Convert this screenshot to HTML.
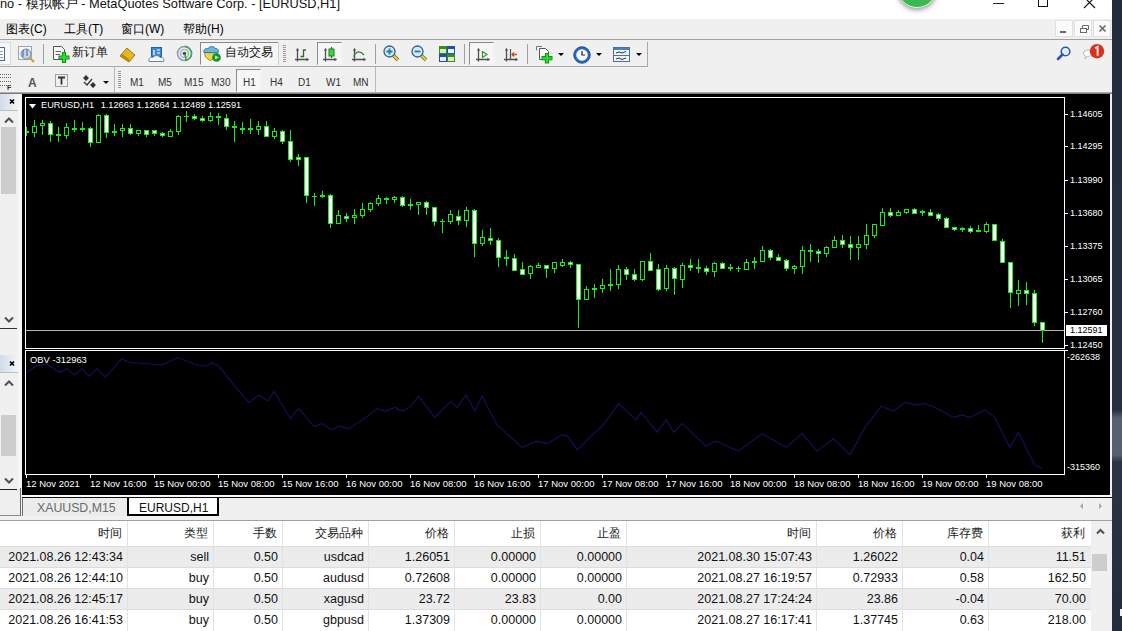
<!DOCTYPE html>
<html><head><meta charset="utf-8">
<style>
*{margin:0;padding:0;box-sizing:border-box}
html,body{width:1122px;height:631px;overflow:hidden;background:#f0f0f0;font-family:"Liberation Sans",sans-serif;color:#000}
.a{position:absolute}
.t{position:absolute;white-space:nowrap;line-height:1}
svg{position:absolute;overflow:visible}
#title{left:0;top:0;width:1112px;height:19px;background:#fff}
#menu{left:0;top:19px;width:1112px;height:21px;background:#f0f0f0;border-bottom:1px solid #a0a0a0}
#tb1{left:0;top:40px;width:1112px;height:27px;background:#f0f0f0}
#tb2{left:0;top:67px;width:1112px;height:27px;background:#f0f0f0}
#desk{left:1112px;top:0;width:10px;height:631px;background:linear-gradient(#222c3b 0,#263040 410px,#56606e 418px,#56606e 455px,#2a3444 462px,#222c3a 631px)}
#chart{left:22px;top:94px;width:1088px;height:401px;background:#000}
.ct{color:#fff;font-size:9px}
#tabs{left:0;top:495px;width:1112px;height:26px;background:#f0f0f0}
#table{left:0;top:521px;width:1112px;height:110px;background:#fff}
.mi{font-size:12px;top:4px}
.tbt{font-size:12px;color:#111}
.tf{font-size:10px;color:#333}
.sep{position:absolute;width:1px;background:#a0a0a0}
.grip{position:absolute;width:3px;background:repeating-linear-gradient(#9a9a9a 0 1px,transparent 1px 2px)}
.pbox{position:absolute;border:1px solid;border-color:#8a8a8a #f4f4f4 #f4f4f4 #8a8a8a;background:#f6f6f6}
.dd{position:absolute;width:0;height:0;border-left:3px solid transparent;border-right:3px solid transparent;border-top:3px solid #000}
.th{position:absolute;top:0;height:25px;line-height:25px;font-size:12px;text-align:right;white-space:nowrap;color:#222}
.row{position:absolute;left:0;width:1091px;height:21px}
.td{position:absolute;top:0;height:21px;line-height:23px;font-size:12.5px;text-align:right;white-space:nowrap;color:#111}
.vl{position:absolute;top:0;width:1px;height:110px;background:#e2e2e2}
</style></head><body>

<div id="title" class="a">
 <div class="t" style="left:0px;top:-2px;font-size:12.8px;color:#111">no - 模拟帐户 - MetaQuotes Software Corp. - [EURUSD,H1]</div>
 <!-- green circle -->
 <div class="a" style="left:897px;top:-32px;width:40px;height:40px;border-radius:50%;background:#3cba50;box-shadow:0 2px 5px rgba(0,0,0,.4);border:1.5px solid #e0f4e0"></div>
 <svg width="1122" height="19" style="left:0;top:0">
  <rect x="993" y="3" width="11" height="1" fill="#222"/>
  <rect x="1038.5" y="-3.5" width="9" height="10" fill="none" stroke="#111" stroke-width="1"/>
  <path d="M1084,-3 L1095,8 M1095,-3 L1084,8" stroke="#111" stroke-width="1.1"/>
 </svg>
</div>

<div id="menu" class="a">
 <div class="t mi" style="left:6px">图表(C)</div>
 <div class="t mi" style="left:64px">工具(T)</div>
 <div class="t mi" style="left:121px">窗口(W)</div>
 <div class="t mi" style="left:183px">帮助(H)</div>
 <div class="a" style="left:1055px;top:1px;width:18px;height:17px;background:#fbfbfb;border:1px solid #e0e0e0"></div>
 <div class="a" style="left:1074px;top:1px;width:18px;height:17px;background:#fbfbfb;border:1px solid #e0e0e0"></div>
 <div class="a" style="left:1093px;top:1px;width:18px;height:17px;background:#fbfbfb;border:1px solid #e0e0e0"></div>
 <svg width="60" height="20" style="left:1055px;top:0">
  <rect x="5" y="12" width="6" height="2" fill="#6a6a6a"/>
  <rect x="25.5" y="9.5" width="6" height="4" fill="none" stroke="#6a6a6a"/>
  <path d="M27.5,9.5 V6.5 H33.5 V10.5 H31.5" fill="none" stroke="#6a6a6a"/>
  <path d="M44.5,6.5 L50.5,12.5 M50.5,6.5 L44.5,12.5" stroke="#6a6a6a" stroke-width="1.7"/>
 </svg>
</div>

<div id="tb1" class="a">
 <!-- group 1 -->
 <div class="pbox" style="left:-2px;top:2px;width:13px;height:23px;background:#f6f8fb;border-color:#d9d9d9"></div>
 <svg width="10" height="20" style="left:0;top:5px"><rect x="-4.5" y="2.5" width="9" height="13" fill="#fff" stroke="#4a6b9a"/><path d="M-3,6.5 H3 M-3,9.5 H3 M-3,12.5 H3" stroke="#8aa0c0"/></svg>
 <svg width="18" height="18" style="left:18px;top:46px;top:6px">
  <rect x="0.5" y="0.5" width="13" height="13" fill="#f4f6f8" stroke="#9aa6b2"/>
  <circle cx="8" cy="8" r="5" fill="#c4d4e8" stroke="#7890aa"/>
  <path d="M5,4 V11 M9,3 V10" stroke="#45607e"/>
  <path d="M11.5,11.5 L16,16" stroke="#c8a040" stroke-width="2.2"/>
 </svg>
 <div class="sep" style="left:43px;top:4px;height:20px"></div>
 <svg width="18" height="18" style="left:53px;top:6px">
  <path d="M0.5,0.5 H8.5 L11.5,3.5 V13.5 H0.5 Z" fill="#f8f8f8" stroke="#555"/>
  <path d="M2.5,5.5 H8 M2.5,8.5 H7" stroke="#666"/>
  <path d="M11,6 V17 M5.5,11.5 H16.5" stroke="#0a9a14" stroke-width="4.2"/>
  <path d="M11,7 V16 M6.5,11.5 H15.5" stroke="#38d838" stroke-width="2"/>
 </svg>
 <div class="t tbt" style="left:72px;top:6px">新订单</div>
 <svg width="18" height="16" style="left:119px;top:7px">
  <path d="M1,9 L8,1 L16,8 L10,15 Z" fill="#e6b820" stroke="#a07810"/>
  <path d="M1,9 L10,15 L10,12 L3,7 Z" fill="#b88a10"/>
 </svg>
 <svg width="18" height="16" style="left:148px;top:7px">
  <rect x="3.5" y="0.5" width="10" height="9" fill="#3d8ad8" stroke="#2060a8"/>
  <path d="M6,3 V8 M9,3 H12 M9,6 H12" stroke="#fff" stroke-width="1.2"/>
  <path d="M1,14.5 C0,11 3,9.5 5,10.5 C6,8 11,8 12,10.5 C14.5,9.5 17,12 15.5,14.5 Z" fill="#f4f6fa" stroke="#6a80a0"/>
 </svg>
 <svg width="18" height="18" style="left:176px;top:5px">
  <path d="M8.5,1.5 A7,7 0 0 0 8.5,15.5" fill="none" stroke="#8a9ab8" stroke-width="1.6"/>
  <path d="M8.5,4.5 A4,4 0 0 0 8.5,12.5" fill="none" stroke="#a8b4d0" stroke-width="1.6"/>
  <path d="M8.5,1.5 A7,7 0 0 1 8.5,15.5" fill="none" stroke="#5a9a68" stroke-width="1.8"/>
  <path d="M8.5,4.5 A4,4 0 0 1 8.5,12.5" fill="none" stroke="#8ac898" stroke-width="1.6"/>
  <circle cx="8.5" cy="8.5" r="1.8" fill="#2f5a58"/>
  <path d="M9,9 L10,15" stroke="#4a8a58" stroke-width="1.5"/>
 </svg>
 <div class="pbox" style="left:200px;top:2px;width:79px;height:23px"></div>
 <svg width="20" height="18" style="left:203px;top:5px">
  <path d="M1.5,7.5 L14.5,7.5 L13,13 L7,15.5 L2.5,12 Z" fill="#ecd83a" stroke="#a08a20"/>
  <path d="M1,7.5 C0,4.5 3,3 5,3.8 C6,1 11,0.8 12,3.5 C14.5,3 16.5,5.5 15,7.8 Z" fill="#6ab8e0" stroke="#2a78b0"/>
  <circle cx="13.5" cy="12.5" r="4.3" fill="#12942a"/>
  <path d="M12.2,10.5 L15.8,12.5 L12.2,14.5 Z" fill="#d8f8d0"/>
 </svg>
 <div class="t tbt" style="left:225px;top:6px">自动交易</div>
 <!-- group 2 -->
 <div class="sep" style="left:278px;top:2px;height:23px;background:#d0d0d0"></div>
 <div class="grip" style="left:283px;top:5px;height:18px"></div>
 <svg width="16" height="16" style="left:294px;top:48px;top:8px"><path d="M3.5,0.5 V13.5 M1,11.5 H14.5" fill="none" stroke="#505050" stroke-width="1.3"/><path d="M1.8,2.6 L3.5,0.3 L5.2,2.6 Z M12.4,9.8 L14.8,11.5 L12.4,13.2 Z" fill="#505050"/><path d="M6.5,8.5 H9.5 V2 H12" fill="none" stroke="#2f6a2f" stroke-width="1.3"/></svg>
 <div class="pbox" style="left:317px;top:2px;width:25px;height:23px"></div>
 <svg width="16" height="16" style="left:322px;top:8px"><path d="M3.5,0.5 V13.5 M1,11.5 H14.5" fill="none" stroke="#505050" stroke-width="1.3"/><path d="M1.8,2.6 L3.5,0.3 L5.2,2.6 Z M12.4,9.8 L14.8,11.5 L12.4,13.2 Z" fill="#505050"/><path d="M9.5,-1 V10" stroke="#2a6a2a" stroke-width="1.2"/><rect x="7" y="1" width="5" height="7" fill="#3cd83c" stroke="#1a7a1a"/></svg>
 <svg width="16" height="16" style="left:351px;top:8px"><path d="M3.5,0.5 V13.5 M1,11.5 H14.5" fill="none" stroke="#505050" stroke-width="1.3"/><path d="M1.8,2.6 L3.5,0.3 L5.2,2.6 Z M12.4,9.8 L14.8,11.5 L12.4,13.2 Z" fill="#505050"/><path d="M2.5,8.5 Q7,0 13,7" fill="none" stroke="#3a7a3a" stroke-width="1.2"/></svg>
 <div class="sep" style="left:375px;top:4px;height:20px"></div>
 <svg width="18" height="16" style="left:383px;top:5px">
  <path d="M9.5,9.5 L15,15" stroke="#6a6a30" stroke-width="3.6"/><path d="M9.5,9.5 L15,15" stroke="#e8d040" stroke-width="2"/>
  <circle cx="6.5" cy="6.5" r="5.5" fill="#cfeefa" stroke="#3a5a8a" stroke-width="1.3"/>
  <path d="M3.5,6.5 H9.5 M6.5,3.5 V9.5" stroke="#2a7aa0" stroke-width="1.8"/>
 </svg>
 <svg width="18" height="16" style="left:411px;top:5px">
  <path d="M9.5,9.5 L15,15" stroke="#6a6a30" stroke-width="3.6"/><path d="M9.5,9.5 L15,15" stroke="#e8d040" stroke-width="2"/>
  <circle cx="6.5" cy="6.5" r="5.5" fill="#cfeefa" stroke="#3a5a8a" stroke-width="1.3"/>
  <path d="M3.5,6.5 H9.5" stroke="#2a7aa0" stroke-width="1.8"/>
 </svg>
 <svg width="18" height="17" style="left:439px;top:6px">
  <rect x="0" y="0" width="8" height="8" fill="#3a8a2a"/><rect x="8" y="0" width="8" height="8" fill="#2050a8"/>
  <rect x="0" y="8" width="8" height="8" fill="#2050a8"/><rect x="8" y="8" width="8" height="8" fill="#3a8a2a"/>
  <rect x="1" y="3" width="6" height="4" fill="#d8f0b8"/><rect x="9" y="3" width="6" height="4" fill="#e8f0ff"/>
  <rect x="1" y="11" width="6" height="4" fill="#e8f0ff"/><rect x="9" y="11" width="6" height="4" fill="#d8f0b8"/>
 </svg>
 <div class="sep" style="left:464px;top:4px;height:20px"></div>
 <div class="pbox" style="left:469px;top:2px;width:25px;height:23px"></div>
 <svg width="16" height="16" style="left:475px;top:8px"><path d="M3.5,0.5 V13.5 M1,11.5 H14.5" fill="none" stroke="#505050" stroke-width="1.3"/><path d="M1.8,2.6 L3.5,0.3 L5.2,2.6 Z M12.4,9.8 L14.8,11.5 L12.4,13.2 Z" fill="#505050"/><path d="M7.5,3.5 L12,6.5 L7.5,9.5 Z" fill="none" stroke="#2a9a2a" stroke-width="1.2"/></svg>
 <svg width="16" height="16" style="left:503px;top:8px"><path d="M3.5,0.5 V13.5 M1,11.5 H14.5" fill="none" stroke="#505050" stroke-width="1.3"/><path d="M1.8,2.6 L3.5,0.3 L5.2,2.6 Z M12.4,9.8 L14.8,11.5 L12.4,13.2 Z" fill="#505050"/><path d="M7.5,1 V11" stroke="#505050" stroke-width="1.2"/><path d="M14,6.5 H9 M11,4.5 L9,6.5 L11,8.5" fill="none" stroke="#c05020" stroke-width="1.3"/></svg>
 <div class="sep" style="left:527px;top:4px;height:20px"></div>
 <svg width="18" height="18" style="left:536px;top:6px">
  <path d="M3.5,2.5 H9.5 L12.5,5.5 V13.5 H3.5 Z" fill="#fff" stroke="#555"/>
  <path d="M0.5,4.5 V0.5 H6" fill="none" stroke="#777"/>
  <path d="M11,7 V17.5 M5.5,12.2 H16.5" stroke="#0a9a14" stroke-width="4.2"/>
  <path d="M11,8 V16.5 M6.5,12.2 H15.5" stroke="#38d838" stroke-width="2"/>
 </svg>
 <div class="dd" style="left:558px;top:13px"></div>
 <svg width="18" height="18" style="left:573px;top:6px">
  <circle cx="9" cy="9" r="8.2" fill="#2a68c0" stroke="#1a4890"/>
  <circle cx="9" cy="9" r="5.8" fill="#f4f8ff"/>
  <path d="M9,5 V9 H12" fill="none" stroke="#222" stroke-width="1.2"/>
 </svg>
 <div class="dd" style="left:596px;top:13px"></div>
 <svg width="18" height="16" style="left:613px;top:7px">
  <rect x="0.5" y="0.5" width="16" height="14" fill="#eef4fa" stroke="#4a70a0"/>
  <rect x="1" y="1" width="15" height="2" fill="#4a80c0"/>
  <path d="M0.5,8.5 H16.5" stroke="#4a70a0"/>
  <path d="M3,6 L6,5 L9,6 L13,4.5 M3,12 L6,11 L9,12.5 L13,11" fill="none" stroke="#333"/>
 </svg>
 <div class="dd" style="left:636px;top:13px"></div>
 <div class="sep" style="left:647px;top:2px;height:25px;background:#a8a8a8"></div>
 <!-- right icons -->
 <svg width="16" height="16" style="left:1056px;top:6px">
  <circle cx="9.5" cy="5.5" r="4.3" fill="#e8f0fc" stroke="#2a58b0" stroke-width="1.6"/>
  <path d="M6.5,8.5 L2,13" stroke="#2a58b0" stroke-width="2.6" stroke-linecap="round"/>
 </svg>
 <svg width="24" height="20" style="left:1082px;top:3px">
  <path d="M1.5,10 C1.5,6 11,6 11,10 C11,13 6,13.5 5,13.5 L3,16 L3.5,13 C2,12.5 1.5,11.5 1.5,10 Z" fill="#fafafa" stroke="#b8b8b8"/>
  <circle cx="15" cy="8.2" r="7.2" fill="#d8321e"/>
  <path d="M13.2,5.3 L15.6,3.8 V12.8" fill="none" stroke="#fff" stroke-width="1.8"/>
 </svg>
 <div class="a" style="left:0;top:26px;width:648px;height:1px;background:#a8a8a8"></div>
</div>

<div id="tb2" class="a">
 <svg width="14" height="20" style="left:0;top:6px">
  <path d="M0,1.5 H11 M0,4.5 H11 M0,8.5 H11 M0,12.5 H8" stroke="#666" stroke-dasharray="1 1"/>
  <text x="7" y="17" font-size="7" font-weight="bold" fill="#333" font-family="Liberation Sans">F</text>
 </svg>
 <div class="t" style="left:28px;top:10px;font-size:12px;font-weight:bold;color:#555">A</div>
 <svg width="14" height="14" style="left:55px;top:7px">
  <rect x="0.5" y="0.5" width="12" height="12" fill="none" stroke="#555" stroke-dasharray="1 1"/>
  <path d="M3,3.5 H10 M6.5,3.5 V10.5" stroke="#333" stroke-width="1.8"/>
 </svg>
 <svg width="16" height="16" style="left:82px;top:7px">
  <path d="M1,4 L4,1 L7,4 L4,7 Z M8,11 L11,8 L14,11 L11,14 Z" fill="#333"/>
  <path d="M2,8 L5,11 L10,5" fill="none" stroke="#333" stroke-width="1.3"/>
 </svg>
 <div class="dd" style="left:103px;top:14px;border-top-color:#111"></div>
 <div class="sep" style="left:114px;top:0px;height:26px;background:#b8b8b8"></div>
 <div class="grip" style="left:118px;top:4px;height:18px"></div>
 <div class="t tf" style="left:130px;top:11px">M1</div>
 <div class="t tf" style="left:158px;top:11px">M5</div>
 <div class="t tf" style="left:184px;top:11px">M15</div>
 <div class="t tf" style="left:211px;top:11px">M30</div>
 <div class="pbox" style="left:236px;top:2px;width:25px;height:23px"></div>
 <div class="t tf" style="left:243px;top:11px">H1</div>
 <div class="t tf" style="left:270px;top:11px">H4</div>
 <div class="t tf" style="left:298px;top:11px">D1</div>
 <div class="t tf" style="left:326px;top:11px">W1</div>
 <div class="t tf" style="left:353px;top:11px">MN</div>
 <div class="sep" style="left:375px;top:0px;height:26px;background:#b8b8b8"></div>
 <div class="a" style="left:0;top:25px;width:1112px;height:2px;background:linear-gradient(#c8c8c8,#606060)"></div>
</div>

<!-- left navigator panels -->
<div class="a" style="left:0;top:94px;width:18px;height:400px;background:#f0f0f0">
 <div class="a" style="left:0;top:0;width:18px;height:16px;background:linear-gradient(90deg,#cfdcec,#f4f4f4)"></div>
 <svg width="18" height="16" style="left:0;top:0"><path d="M10,5.5 L14,9.5 M14,5.5 L10,9.5" stroke="#000" stroke-width="1.7"/></svg>
 <div class="a" style="left:0;top:16px;width:18px;height:1px;background:#c0c0c0"></div>
 <svg width="18" height="10" style="left:0;top:22px"><path d="M5,6.5 L9,2.5 L13,6.5" fill="none" stroke="#505050" stroke-width="2"/></svg>
 <div class="a" style="left:1px;top:33px;width:15px;height:67px;background:#cdcdcd"></div>
 <svg width="18" height="10" style="left:0;top:221px"><path d="M5,2.5 L9,6.5 L13,2.5" fill="none" stroke="#505050" stroke-width="2"/></svg>
 <div class="a" style="left:0;top:234px;width:17px;height:1px;background:#333"></div>
 <div class="a" style="left:0;top:261px;width:18px;height:17px;background:linear-gradient(90deg,#cfdcec,#f4f4f4)"></div>
 <svg width="18" height="16" style="left:0;top:262px"><path d="M10,5.5 L14,9.5 M14,5.5 L10,9.5" stroke="#000" stroke-width="1.7"/></svg>
 <div class="a" style="left:0;top:278px;width:18px;height:1px;background:#c0c0c0"></div>
 <svg width="18" height="10" style="left:0;top:285px"><path d="M5,6.5 L9,2.5 L13,6.5" fill="none" stroke="#505050" stroke-width="2"/></svg>
 <div class="a" style="left:1px;top:321px;width:15px;height:41px;background:#cdcdcd"></div>
 <svg width="18" height="10" style="left:0;top:382px"><path d="M5,2.5 L9,6.5 L13,2.5" fill="none" stroke="#505050" stroke-width="2"/></svg>
 <div class="a" style="left:0;top:395px;width:17px;height:1px;background:#333"></div>
 <div class="a" style="left:18px;top:0;width:4px;height:400px;background:#f6f6f6"></div>
</div>

<div id="chart" class="a">
<svg width="1088" height="401" viewBox="22 94 1088 401" style="left:0;top:0">
 <defs><clipPath id="cp"><rect x="26" y="98" width="1038" height="250"/></clipPath></defs>
 <g shape-rendering="crispEdges">
 <rect x="26" y="330" width="1038" height="1" fill="#b4b4b4"/>
 <g clip-path="url(#cp)"><rect x="26" y="127" width="1" height="9" fill="#14f014"/><rect x="24" y="131" width="5" height="2" fill="#14f014"/><rect x="34" y="120" width="1" height="17" fill="#14f014"/><rect x="32" y="126" width="5" height="7" fill="#14f014"/><rect x="33" y="127" width="3" height="5" fill="#000000"/><rect x="42" y="120" width="1" height="15" fill="#14f014"/><rect x="40" y="123" width="5" height="3" fill="#14f014"/><rect x="41" y="124" width="3" height="1" fill="#000000"/><rect x="50" y="121" width="1" height="21" fill="#14f014"/><rect x="48" y="123" width="5" height="12" fill="#14f014"/><rect x="49" y="124" width="3" height="10" fill="#ffffff"/><rect x="58" y="127" width="1" height="15" fill="#14f014"/><rect x="56" y="134" width="5" height="2" fill="#14f014"/><rect x="66" y="123" width="1" height="16" fill="#14f014"/><rect x="64" y="127" width="5" height="9" fill="#14f014"/><rect x="65" y="128" width="3" height="7" fill="#000000"/><rect x="74" y="120" width="1" height="12" fill="#14f014"/><rect x="72" y="128" width="5" height="2" fill="#14f014"/><rect x="82" y="122" width="1" height="10" fill="#14f014"/><rect x="80" y="128" width="5" height="2" fill="#14f014"/><rect x="90" y="127" width="1" height="20" fill="#14f014"/><rect x="88" y="128" width="5" height="15" fill="#14f014"/><rect x="89" y="129" width="3" height="13" fill="#ffffff"/><rect x="98" y="114" width="1" height="29" fill="#14f014"/><rect x="96" y="115" width="5" height="28" fill="#14f014"/><rect x="97" y="116" width="3" height="26" fill="#000000"/><rect x="106" y="114" width="1" height="24" fill="#14f014"/><rect x="104" y="115" width="5" height="18" fill="#14f014"/><rect x="105" y="116" width="3" height="16" fill="#ffffff"/><rect x="114" y="124" width="1" height="12" fill="#14f014"/><rect x="112" y="131" width="5" height="2" fill="#14f014"/><rect x="122" y="124" width="1" height="13" fill="#14f014"/><rect x="120" y="128" width="5" height="3" fill="#14f014"/><rect x="121" y="129" width="3" height="1" fill="#000000"/><rect x="130" y="124" width="1" height="11" fill="#14f014"/><rect x="128" y="128" width="5" height="6" fill="#14f014"/><rect x="129" y="129" width="3" height="4" fill="#ffffff"/><rect x="138" y="130" width="1" height="6" fill="#14f014"/><rect x="136" y="130" width="5" height="4" fill="#14f014"/><rect x="137" y="131" width="3" height="2" fill="#000000"/><rect x="146" y="130" width="1" height="7" fill="#14f014"/><rect x="144" y="130" width="5" height="5" fill="#14f014"/><rect x="145" y="131" width="3" height="3" fill="#ffffff"/><rect x="154" y="130" width="1" height="6" fill="#14f014"/><rect x="152" y="130" width="5" height="4" fill="#14f014"/><rect x="153" y="131" width="3" height="2" fill="#ffffff"/><rect x="162" y="132" width="1" height="5" fill="#14f014"/><rect x="160" y="133" width="5" height="3" fill="#14f014"/><rect x="161" y="134" width="3" height="1" fill="#ffffff"/><rect x="170" y="129" width="1" height="8" fill="#14f014"/><rect x="168" y="131" width="5" height="6" fill="#14f014"/><rect x="169" y="132" width="3" height="4" fill="#000000"/><rect x="178" y="115" width="1" height="20" fill="#14f014"/><rect x="176" y="116" width="5" height="16" fill="#14f014"/><rect x="177" y="117" width="3" height="14" fill="#000000"/><rect x="186" y="111" width="1" height="11" fill="#14f014"/><rect x="184" y="116" width="5" height="1" fill="#14f014"/><rect x="194" y="114" width="1" height="6" fill="#14f014"/><rect x="192" y="116" width="5" height="3" fill="#14f014"/><rect x="193" y="117" width="3" height="1" fill="#ffffff"/><rect x="202" y="116" width="1" height="6" fill="#14f014"/><rect x="200" y="118" width="5" height="3" fill="#14f014"/><rect x="201" y="119" width="3" height="1" fill="#ffffff"/><rect x="210" y="112" width="1" height="10" fill="#14f014"/><rect x="208" y="116" width="5" height="5" fill="#14f014"/><rect x="209" y="117" width="3" height="3" fill="#000000"/><rect x="218" y="113" width="1" height="12" fill="#14f014"/><rect x="216" y="116" width="5" height="2" fill="#14f014"/><rect x="226" y="114" width="1" height="16" fill="#14f014"/><rect x="224" y="118" width="5" height="9" fill="#14f014"/><rect x="225" y="119" width="3" height="7" fill="#ffffff"/><rect x="234" y="121" width="1" height="21" fill="#14f014"/><rect x="232" y="126" width="5" height="2" fill="#14f014"/><rect x="242" y="122" width="1" height="12" fill="#14f014"/><rect x="240" y="128" width="5" height="2" fill="#14f014"/><rect x="250" y="119" width="1" height="15" fill="#14f014"/><rect x="248" y="128" width="5" height="2" fill="#14f014"/><rect x="258" y="121" width="1" height="14" fill="#14f014"/><rect x="256" y="126" width="5" height="4" fill="#14f014"/><rect x="257" y="127" width="3" height="2" fill="#000000"/><rect x="266" y="121" width="1" height="16" fill="#14f014"/><rect x="264" y="126" width="5" height="11" fill="#14f014"/><rect x="265" y="127" width="3" height="9" fill="#ffffff"/><rect x="274" y="128" width="1" height="11" fill="#14f014"/><rect x="272" y="131" width="5" height="6" fill="#14f014"/><rect x="273" y="132" width="3" height="4" fill="#000000"/><rect x="282" y="130" width="1" height="14" fill="#14f014"/><rect x="280" y="131" width="5" height="11" fill="#14f014"/><rect x="281" y="132" width="3" height="9" fill="#ffffff"/><rect x="290" y="130" width="1" height="32" fill="#14f014"/><rect x="288" y="141" width="5" height="19" fill="#14f014"/><rect x="289" y="142" width="3" height="17" fill="#ffffff"/><rect x="298" y="154" width="1" height="12" fill="#14f014"/><rect x="296" y="157" width="5" height="3" fill="#14f014"/><rect x="297" y="158" width="3" height="1" fill="#ffffff"/><rect x="306" y="157" width="1" height="46" fill="#14f014"/><rect x="304" y="157" width="5" height="39" fill="#14f014"/><rect x="305" y="158" width="3" height="37" fill="#ffffff"/><rect x="314" y="193" width="1" height="13" fill="#14f014"/><rect x="312" y="196" width="5" height="1" fill="#14f014"/><rect x="322" y="191" width="1" height="7" fill="#14f014"/><rect x="320" y="195" width="5" height="2" fill="#14f014"/><rect x="330" y="194" width="1" height="34" fill="#14f014"/><rect x="328" y="195" width="5" height="29" fill="#14f014"/><rect x="329" y="196" width="3" height="27" fill="#ffffff"/><rect x="338" y="210" width="1" height="14" fill="#14f014"/><rect x="336" y="215" width="5" height="9" fill="#14f014"/><rect x="337" y="216" width="3" height="7" fill="#000000"/><rect x="346" y="213" width="1" height="9" fill="#14f014"/><rect x="344" y="216" width="5" height="3" fill="#14f014"/><rect x="345" y="217" width="3" height="1" fill="#ffffff"/><rect x="354" y="209" width="1" height="15" fill="#14f014"/><rect x="352" y="215" width="5" height="3" fill="#14f014"/><rect x="353" y="216" width="3" height="1" fill="#000000"/><rect x="362" y="203" width="1" height="15" fill="#14f014"/><rect x="360" y="209" width="5" height="7" fill="#14f014"/><rect x="361" y="210" width="3" height="5" fill="#000000"/><rect x="370" y="202" width="1" height="10" fill="#14f014"/><rect x="368" y="203" width="5" height="7" fill="#14f014"/><rect x="369" y="204" width="3" height="5" fill="#000000"/><rect x="378" y="195" width="1" height="11" fill="#14f014"/><rect x="376" y="198" width="5" height="6" fill="#14f014"/><rect x="377" y="199" width="3" height="4" fill="#000000"/><rect x="386" y="197" width="1" height="7" fill="#14f014"/><rect x="384" y="198" width="5" height="2" fill="#14f014"/><rect x="394" y="196" width="1" height="7" fill="#14f014"/><rect x="392" y="197" width="5" height="3" fill="#14f014"/><rect x="393" y="198" width="3" height="1" fill="#000000"/><rect x="402" y="196" width="1" height="11" fill="#14f014"/><rect x="400" y="197" width="5" height="9" fill="#14f014"/><rect x="401" y="198" width="3" height="7" fill="#ffffff"/><rect x="410" y="199" width="1" height="11" fill="#14f014"/><rect x="408" y="204" width="5" height="2" fill="#14f014"/><rect x="418" y="202" width="1" height="13" fill="#14f014"/><rect x="416" y="202" width="5" height="3" fill="#14f014"/><rect x="417" y="203" width="3" height="1" fill="#000000"/><rect x="426" y="201" width="1" height="14" fill="#14f014"/><rect x="424" y="202" width="5" height="6" fill="#14f014"/><rect x="425" y="203" width="3" height="4" fill="#ffffff"/><rect x="434" y="207" width="1" height="19" fill="#14f014"/><rect x="432" y="207" width="5" height="15" fill="#14f014"/><rect x="433" y="208" width="3" height="13" fill="#ffffff"/><rect x="442" y="219" width="1" height="14" fill="#14f014"/><rect x="440" y="221" width="5" height="1" fill="#14f014"/><rect x="450" y="210" width="1" height="14" fill="#14f014"/><rect x="448" y="214" width="5" height="8" fill="#14f014"/><rect x="449" y="215" width="3" height="6" fill="#000000"/><rect x="458" y="210" width="1" height="15" fill="#14f014"/><rect x="456" y="216" width="5" height="5" fill="#14f014"/><rect x="457" y="217" width="3" height="3" fill="#ffffff"/><rect x="466" y="207" width="1" height="20" fill="#14f014"/><rect x="464" y="210" width="5" height="11" fill="#14f014"/><rect x="465" y="211" width="3" height="9" fill="#000000"/><rect x="474" y="209" width="1" height="48" fill="#14f014"/><rect x="472" y="210" width="5" height="34" fill="#14f014"/><rect x="473" y="211" width="3" height="32" fill="#ffffff"/><rect x="482" y="230" width="1" height="16" fill="#14f014"/><rect x="480" y="237" width="5" height="7" fill="#14f014"/><rect x="481" y="238" width="3" height="5" fill="#000000"/><rect x="490" y="228" width="1" height="17" fill="#14f014"/><rect x="488" y="238" width="5" height="3" fill="#14f014"/><rect x="489" y="239" width="3" height="1" fill="#ffffff"/><rect x="498" y="238" width="1" height="29" fill="#14f014"/><rect x="496" y="240" width="5" height="18" fill="#14f014"/><rect x="497" y="241" width="3" height="16" fill="#ffffff"/><rect x="506" y="250" width="1" height="16" fill="#14f014"/><rect x="504" y="257" width="5" height="2" fill="#14f014"/><rect x="514" y="254" width="1" height="17" fill="#14f014"/><rect x="512" y="258" width="5" height="13" fill="#14f014"/><rect x="513" y="259" width="3" height="11" fill="#ffffff"/><rect x="522" y="262" width="1" height="13" fill="#14f014"/><rect x="520" y="269" width="5" height="6" fill="#14f014"/><rect x="521" y="270" width="3" height="4" fill="#ffffff"/><rect x="530" y="265" width="1" height="14" fill="#14f014"/><rect x="528" y="266" width="5" height="8" fill="#14f014"/><rect x="529" y="267" width="3" height="6" fill="#000000"/><rect x="538" y="263" width="1" height="5" fill="#14f014"/><rect x="536" y="265" width="5" height="3" fill="#14f014"/><rect x="537" y="266" width="3" height="1" fill="#000000"/><rect x="546" y="265" width="1" height="13" fill="#14f014"/><rect x="544" y="265" width="5" height="4" fill="#14f014"/><rect x="545" y="266" width="3" height="2" fill="#ffffff"/><rect x="554" y="262" width="1" height="11" fill="#14f014"/><rect x="552" y="262" width="5" height="7" fill="#14f014"/><rect x="553" y="263" width="3" height="5" fill="#000000"/><rect x="562" y="259" width="1" height="8" fill="#14f014"/><rect x="560" y="262" width="5" height="4" fill="#14f014"/><rect x="561" y="263" width="3" height="2" fill="#000000"/><rect x="570" y="261" width="1" height="7" fill="#14f014"/><rect x="568" y="262" width="5" height="3" fill="#14f014"/><rect x="569" y="263" width="3" height="1" fill="#ffffff"/><rect x="578" y="264" width="1" height="64" fill="#14f014"/><rect x="576" y="264" width="5" height="36" fill="#14f014"/><rect x="577" y="265" width="3" height="34" fill="#ffffff"/><rect x="586" y="286" width="1" height="14" fill="#14f014"/><rect x="584" y="289" width="5" height="11" fill="#14f014"/><rect x="585" y="290" width="3" height="9" fill="#000000"/><rect x="594" y="284" width="1" height="14" fill="#14f014"/><rect x="592" y="288" width="5" height="2" fill="#14f014"/><rect x="602" y="279" width="1" height="14" fill="#14f014"/><rect x="600" y="285" width="5" height="4" fill="#14f014"/><rect x="601" y="286" width="3" height="2" fill="#000000"/><rect x="610" y="269" width="1" height="22" fill="#14f014"/><rect x="608" y="284" width="5" height="2" fill="#14f014"/><rect x="618" y="265" width="1" height="24" fill="#14f014"/><rect x="616" y="269" width="5" height="16" fill="#14f014"/><rect x="617" y="270" width="3" height="14" fill="#000000"/><rect x="626" y="267" width="1" height="13" fill="#14f014"/><rect x="624" y="269" width="5" height="6" fill="#14f014"/><rect x="625" y="270" width="3" height="4" fill="#ffffff"/><rect x="634" y="269" width="1" height="12" fill="#14f014"/><rect x="632" y="274" width="5" height="6" fill="#14f014"/><rect x="633" y="275" width="3" height="4" fill="#ffffff"/><rect x="642" y="261" width="1" height="20" fill="#14f014"/><rect x="640" y="261" width="5" height="19" fill="#14f014"/><rect x="641" y="262" width="3" height="17" fill="#000000"/><rect x="650" y="253" width="1" height="18" fill="#14f014"/><rect x="648" y="261" width="5" height="10" fill="#14f014"/><rect x="649" y="262" width="3" height="8" fill="#ffffff"/><rect x="658" y="264" width="1" height="27" fill="#14f014"/><rect x="656" y="269" width="5" height="21" fill="#14f014"/><rect x="657" y="270" width="3" height="19" fill="#ffffff"/><rect x="666" y="265" width="1" height="26" fill="#14f014"/><rect x="664" y="268" width="5" height="21" fill="#14f014"/><rect x="665" y="269" width="3" height="19" fill="#000000"/><rect x="674" y="267" width="1" height="28" fill="#14f014"/><rect x="672" y="268" width="5" height="11" fill="#14f014"/><rect x="673" y="269" width="3" height="9" fill="#ffffff"/><rect x="682" y="263" width="1" height="25" fill="#14f014"/><rect x="680" y="265" width="5" height="15" fill="#14f014"/><rect x="681" y="266" width="3" height="13" fill="#000000"/><rect x="690" y="259" width="1" height="12" fill="#14f014"/><rect x="688" y="265" width="5" height="3" fill="#14f014"/><rect x="689" y="266" width="3" height="1" fill="#ffffff"/><rect x="698" y="259" width="1" height="14" fill="#14f014"/><rect x="696" y="267" width="5" height="2" fill="#14f014"/><rect x="706" y="266" width="1" height="9" fill="#14f014"/><rect x="704" y="268" width="5" height="4" fill="#14f014"/><rect x="705" y="269" width="3" height="2" fill="#ffffff"/><rect x="714" y="262" width="1" height="15" fill="#14f014"/><rect x="712" y="263" width="5" height="9" fill="#14f014"/><rect x="713" y="264" width="3" height="7" fill="#000000"/><rect x="722" y="262" width="1" height="7" fill="#14f014"/><rect x="720" y="263" width="5" height="6" fill="#14f014"/><rect x="721" y="264" width="3" height="4" fill="#ffffff"/><rect x="730" y="264" width="1" height="7" fill="#14f014"/><rect x="728" y="267" width="5" height="2" fill="#14f014"/><rect x="738" y="266" width="1" height="6" fill="#14f014"/><rect x="736" y="268" width="5" height="1" fill="#14f014"/><rect x="746" y="259" width="1" height="11" fill="#14f014"/><rect x="744" y="262" width="5" height="8" fill="#14f014"/><rect x="745" y="263" width="3" height="6" fill="#000000"/><rect x="754" y="257" width="1" height="12" fill="#14f014"/><rect x="752" y="261" width="5" height="2" fill="#14f014"/><rect x="762" y="246" width="1" height="16" fill="#14f014"/><rect x="760" y="250" width="5" height="12" fill="#14f014"/><rect x="761" y="251" width="3" height="10" fill="#000000"/><rect x="770" y="249" width="1" height="11" fill="#14f014"/><rect x="768" y="250" width="5" height="8" fill="#14f014"/><rect x="769" y="251" width="3" height="6" fill="#ffffff"/><rect x="778" y="254" width="1" height="7" fill="#14f014"/><rect x="776" y="257" width="5" height="4" fill="#14f014"/><rect x="777" y="258" width="3" height="2" fill="#ffffff"/><rect x="786" y="259" width="1" height="12" fill="#14f014"/><rect x="784" y="260" width="5" height="9" fill="#14f014"/><rect x="785" y="261" width="3" height="7" fill="#ffffff"/><rect x="794" y="265" width="1" height="9" fill="#14f014"/><rect x="792" y="266" width="5" height="3" fill="#14f014"/><rect x="793" y="267" width="3" height="1" fill="#000000"/><rect x="802" y="246" width="1" height="28" fill="#14f014"/><rect x="800" y="250" width="5" height="17" fill="#14f014"/><rect x="801" y="251" width="3" height="15" fill="#000000"/><rect x="810" y="244" width="1" height="18" fill="#14f014"/><rect x="808" y="250" width="5" height="2" fill="#14f014"/><rect x="818" y="249" width="1" height="14" fill="#14f014"/><rect x="816" y="251" width="5" height="3" fill="#14f014"/><rect x="817" y="252" width="3" height="1" fill="#ffffff"/><rect x="826" y="246" width="1" height="11" fill="#14f014"/><rect x="824" y="247" width="5" height="7" fill="#14f014"/><rect x="825" y="248" width="3" height="5" fill="#000000"/><rect x="834" y="236" width="1" height="12" fill="#14f014"/><rect x="832" y="240" width="5" height="8" fill="#14f014"/><rect x="833" y="241" width="3" height="6" fill="#000000"/><rect x="842" y="235" width="1" height="13" fill="#14f014"/><rect x="840" y="240" width="5" height="5" fill="#14f014"/><rect x="841" y="241" width="3" height="3" fill="#ffffff"/><rect x="850" y="236" width="1" height="24" fill="#14f014"/><rect x="848" y="244" width="5" height="4" fill="#14f014"/><rect x="849" y="245" width="3" height="2" fill="#ffffff"/><rect x="858" y="236" width="1" height="24" fill="#14f014"/><rect x="856" y="244" width="5" height="4" fill="#14f014"/><rect x="857" y="245" width="3" height="2" fill="#000000"/><rect x="866" y="224" width="1" height="25" fill="#14f014"/><rect x="864" y="235" width="5" height="10" fill="#14f014"/><rect x="865" y="236" width="3" height="8" fill="#000000"/><rect x="874" y="224" width="1" height="14" fill="#14f014"/><rect x="872" y="224" width="5" height="12" fill="#14f014"/><rect x="873" y="225" width="3" height="10" fill="#000000"/><rect x="882" y="208" width="1" height="18" fill="#14f014"/><rect x="880" y="212" width="5" height="14" fill="#14f014"/><rect x="881" y="213" width="3" height="12" fill="#000000"/><rect x="890" y="208" width="1" height="9" fill="#14f014"/><rect x="888" y="212" width="5" height="4" fill="#14f014"/><rect x="889" y="213" width="3" height="2" fill="#ffffff"/><rect x="898" y="210" width="1" height="6" fill="#14f014"/><rect x="896" y="212" width="5" height="4" fill="#14f014"/><rect x="897" y="213" width="3" height="2" fill="#000000"/><rect x="906" y="209" width="1" height="5" fill="#14f014"/><rect x="904" y="209" width="5" height="4" fill="#14f014"/><rect x="905" y="210" width="3" height="2" fill="#000000"/><rect x="914" y="208" width="1" height="6" fill="#14f014"/><rect x="912" y="209" width="5" height="5" fill="#14f014"/><rect x="913" y="210" width="3" height="3" fill="#ffffff"/><rect x="922" y="210" width="1" height="6" fill="#14f014"/><rect x="920" y="211" width="5" height="2" fill="#14f014"/><rect x="930" y="209" width="1" height="7" fill="#14f014"/><rect x="928" y="212" width="5" height="4" fill="#14f014"/><rect x="929" y="213" width="3" height="2" fill="#ffffff"/><rect x="938" y="213" width="1" height="8" fill="#14f014"/><rect x="936" y="214" width="5" height="5" fill="#14f014"/><rect x="937" y="215" width="3" height="3" fill="#ffffff"/><rect x="946" y="217" width="1" height="11" fill="#14f014"/><rect x="944" y="218" width="5" height="10" fill="#14f014"/><rect x="945" y="219" width="3" height="8" fill="#ffffff"/><rect x="954" y="227" width="1" height="4" fill="#14f014"/><rect x="952" y="227" width="5" height="3" fill="#14f014"/><rect x="953" y="228" width="3" height="1" fill="#ffffff"/><rect x="962" y="227" width="1" height="5" fill="#14f014"/><rect x="960" y="228" width="5" height="2" fill="#14f014"/><rect x="970" y="226" width="1" height="7" fill="#14f014"/><rect x="968" y="228" width="5" height="4" fill="#14f014"/><rect x="969" y="229" width="3" height="2" fill="#ffffff"/><rect x="978" y="225" width="1" height="7" fill="#14f014"/><rect x="976" y="230" width="5" height="2" fill="#14f014"/><rect x="986" y="222" width="1" height="11" fill="#14f014"/><rect x="984" y="224" width="5" height="8" fill="#14f014"/><rect x="985" y="225" width="3" height="6" fill="#000000"/><rect x="994" y="224" width="1" height="17" fill="#14f014"/><rect x="992" y="224" width="5" height="17" fill="#14f014"/><rect x="993" y="225" width="3" height="15" fill="#ffffff"/><rect x="1002" y="239" width="1" height="24" fill="#14f014"/><rect x="1000" y="241" width="5" height="22" fill="#14f014"/><rect x="1001" y="242" width="3" height="20" fill="#ffffff"/><rect x="1010" y="262" width="1" height="46" fill="#14f014"/><rect x="1008" y="262" width="5" height="31" fill="#14f014"/><rect x="1009" y="263" width="3" height="29" fill="#ffffff"/><rect x="1018" y="280" width="1" height="26" fill="#14f014"/><rect x="1016" y="290" width="5" height="4" fill="#14f014"/><rect x="1017" y="291" width="3" height="2" fill="#000000"/><rect x="1026" y="282" width="1" height="23" fill="#14f014"/><rect x="1024" y="290" width="5" height="4" fill="#14f014"/><rect x="1025" y="291" width="3" height="2" fill="#ffffff"/><rect x="1034" y="290" width="1" height="36" fill="#14f014"/><rect x="1032" y="293" width="5" height="30" fill="#14f014"/><rect x="1033" y="294" width="3" height="28" fill="#ffffff"/><rect x="1042" y="322" width="1" height="21" fill="#14f014"/><rect x="1040" y="322" width="5" height="9" fill="#14f014"/><rect x="1041" y="323" width="3" height="7" fill="#ffffff"/></g>
 <rect x="25" y="97" width="1040" height="1" fill="#fff"/>
 <rect x="25" y="97" width="1" height="252" fill="#fff"/>
 <rect x="1064" y="97" width="1" height="252" fill="#fff"/>
 <rect x="25" y="348" width="1040" height="1" fill="#fff"/>
 <rect x="25" y="350" width="1040" height="1" fill="#fff"/>
 <rect x="25" y="350" width="1" height="124" fill="#fff"/>
 <rect x="1064" y="350" width="1" height="124" fill="#fff"/>
 <rect x="25" y="474" width="1040" height="1" fill="#fff"/>
 <rect x="1065" y="114" width="3" height="1" fill="#fff"/><rect x="1065" y="146" width="3" height="1" fill="#fff"/><rect x="1065" y="180" width="3" height="1" fill="#fff"/><rect x="1065" y="213" width="3" height="1" fill="#fff"/><rect x="1065" y="246" width="3" height="1" fill="#fff"/><rect x="1065" y="279" width="3" height="1" fill="#fff"/><rect x="1065" y="312" width="3" height="1" fill="#fff"/><rect x="1065" y="345" width="3" height="1" fill="#fff"/><rect x="1065" y="350" width="3" height="1" fill="#fff"/><rect x="26" y="475" width="1" height="3" fill="#fff"/><rect x="90" y="475" width="1" height="3" fill="#fff"/><rect x="154" y="475" width="1" height="3" fill="#fff"/><rect x="218" y="475" width="1" height="3" fill="#fff"/><rect x="282" y="475" width="1" height="3" fill="#fff"/><rect x="346" y="475" width="1" height="3" fill="#fff"/><rect x="410" y="475" width="1" height="3" fill="#fff"/><rect x="474" y="475" width="1" height="3" fill="#fff"/><rect x="538" y="475" width="1" height="3" fill="#fff"/><rect x="602" y="475" width="1" height="3" fill="#fff"/><rect x="666" y="475" width="1" height="3" fill="#fff"/><rect x="730" y="475" width="1" height="3" fill="#fff"/><rect x="794" y="475" width="1" height="3" fill="#fff"/><rect x="858" y="475" width="1" height="3" fill="#fff"/><rect x="922" y="475" width="1" height="3" fill="#fff"/><rect x="986" y="475" width="1" height="3" fill="#fff"/>
 </g>
 <path d="M27.0,372.5 L35.7,366.0 L47.0,363.7 L59.4,372.5 L67.0,368.7 L74.4,375.0 L82.0,368.7 L89.4,376.2 L97.0,368.7 L105.6,377.0 L121.8,358.7 L129.3,362.5 L146.8,363.7 L161.8,365.0 L178.0,357.5 L196.7,365.0 L206.7,366.2 L211.7,362.5 L219.0,366.2 L231.6,382.4 L249.0,402.4 L259.0,395.0 L267.8,401.0 L274.0,391.2 L290.3,418.6 L298.7,408.6 L313.7,426.1 L322.4,423.6 L331.2,429.9 L338.7,426.1 L348.6,428.6 L362.4,419.9 L377.3,408.6 L384.8,411.1 L394.8,407.4 L402.3,411.1 L409.8,407.4 L418.5,396.2 L434.7,417.4 L451.0,401.2 L457.2,407.4 L466.0,394.9 L474.7,411.1 L482.2,396.2 L497.1,424.9 L522.1,447.3 L537.0,441.1 L547.0,443.6 L562.0,434.8 L567.5,436.1 L577.5,449.8 L592.4,434.8 L602.4,426.1 L618.6,403.6 L636.1,419.9 L641.1,412.4 L657.3,432.3 L666.1,419.9 L673.6,432.3 L682.3,423.6 L706.0,446.1 L716.0,441.1 L738.4,451.1 L762.1,433.6 L785.9,447.3 L802.1,433.6 L817.0,451.1 L833.5,438.6 L850.0,454.8 L865.0,427.4 L881.1,406.1 L893.6,411.1 L904.9,402.4 L914.8,404.9 L924.8,403.6 L937.3,408.6 L953.5,417.4 L962.3,414.9 L969.7,417.4 L984.7,409.9 L994.7,417.4 L1009.7,447.3 L1018.4,432.3 L1034.6,464.8 L1042.1,468.5" fill="none" stroke="#13115e" stroke-width="1.1"/>
</svg>
 <svg width="10" height="8" style="left:7px;top:10px"><path d="M0,0 H7 L3.5,4.5 Z" fill="#fff"/></svg><div class="t ct" style="left:19px;top:7px;font-size:9.2px">EURUSD,H1&nbsp; <span style="margin-left:1.5px">1.12663 1.12664 1.12489 1.12591</span></div><div class="t ct" style="left:8px;top:261px;font-size:9.4px">OBV -312963</div><div class="t ct" style="left:1048px;top:16px">1.14605</div><div class="t ct" style="left:1048px;top:48px">1.14295</div><div class="t ct" style="left:1048px;top:82px">1.13990</div><div class="t ct" style="left:1048px;top:115px">1.13680</div><div class="t ct" style="left:1048px;top:148px">1.13375</div><div class="t ct" style="left:1048px;top:181px">1.13065</div><div class="t ct" style="left:1048px;top:214px">1.12760</div><div class="t ct" style="left:1048px;top:247px">1.12450</div><div class="a" style="left:1044px;top:231px;width:41px;height:11px;background:#fff"></div><div class="t ct" style="left:1048px;top:232px;color:#000">1.12591</div><div class="t ct" style="left:1045px;top:259px">-262638</div><div class="t ct" style="left:1045px;top:369px">-315360</div><div class="t ct" style="left:4px;top:385px;font-size:9.5px">12 Nov 2021</div><div class="t ct" style="left:68px;top:385px;font-size:9.5px">12 Nov 16:00</div><div class="t ct" style="left:132px;top:385px;font-size:9.5px">15 Nov 00:00</div><div class="t ct" style="left:196px;top:385px;font-size:9.5px">15 Nov 08:00</div><div class="t ct" style="left:260px;top:385px;font-size:9.5px">15 Nov 16:00</div><div class="t ct" style="left:324px;top:385px;font-size:9.5px">16 Nov 00:00</div><div class="t ct" style="left:388px;top:385px;font-size:9.5px">16 Nov 08:00</div><div class="t ct" style="left:452px;top:385px;font-size:9.5px">16 Nov 16:00</div><div class="t ct" style="left:516px;top:385px;font-size:9.5px">17 Nov 00:00</div><div class="t ct" style="left:580px;top:385px;font-size:9.5px">17 Nov 08:00</div><div class="t ct" style="left:644px;top:385px;font-size:9.5px">17 Nov 16:00</div><div class="t ct" style="left:708px;top:385px;font-size:9.5px">18 Nov 00:00</div><div class="t ct" style="left:772px;top:385px;font-size:9.5px">18 Nov 08:00</div><div class="t ct" style="left:836px;top:385px;font-size:9.5px">18 Nov 16:00</div><div class="t ct" style="left:900px;top:385px;font-size:9.5px">19 Nov 00:00</div><div class="t ct" style="left:964px;top:385px;font-size:9.5px">19 Nov 08:00</div>
</div>

<div id="tabs" class="a">
 <div class="a" style="left:0;top:0;width:1112px;height:2px;background:#fafafa"></div>
 <div class="a" style="left:0;top:-7px;width:21px;height:28px;background:#efefef;border-right:1px solid #6a6a6a;border-bottom:1px solid #8a8a8a"></div>
 <div class="a" style="left:0;top:-6px;width:17px;height:1px;background:#222"></div>
 <div class="a" style="left:22px;top:2px;width:1090px;height:1px;background:#111"></div>
 <div class="a" style="left:22px;top:3px;width:105px;height:18px;background:#ececec;border-left:1px solid #707070"></div>
 <div class="t" style="left:37px;top:7px;font-size:12.3px;color:#6a6a6a">XAUUSD,M15</div>
 <div class="a" style="left:127px;top:3px;width:92px;height:18px;background:#fff;border:2px solid #000;border-top:0"></div>
 <div class="t" style="left:139px;top:7px;font-size:12px;color:#111">EURUSD,H1</div>
 <svg width="30" height="12" style="left:1076px;top:8px"><path d="M7,0 L4,3 L7,6 Z M23,0 L26,3 L23,6 Z" fill="#a8a8a8"/></svg>
 <div class="a" style="left:0;top:25px;width:1112px;height:1px;background:#a0a0a0"></div>
</div>

<div id="table" class="a">
 <div class="row" style="top:25px;background:#ececec"></div><div class="a" style="left:0;top:25px;width:1091px;height:1px;background:#dcdcdc"></div><div class="row" style="top:46px;background:#ffffff"></div><div class="a" style="left:0;top:46px;width:1091px;height:1px;background:#dcdcdc"></div><div class="row" style="top:67px;background:#ececec"></div><div class="a" style="left:0;top:67px;width:1091px;height:1px;background:#dcdcdc"></div><div class="row" style="top:88px;background:#ffffff"></div><div class="a" style="left:0;top:88px;width:1091px;height:1px;background:#dcdcdc"></div><div class="vl" style="left:127px"></div><div class="vl" style="left:213px"></div><div class="vl" style="left:282px"></div><div class="vl" style="left:368px"></div><div class="vl" style="left:454px"></div><div class="vl" style="left:540px"></div><div class="vl" style="left:626px"></div><div class="vl" style="left:816px"></div><div class="vl" style="left:902px"></div><div class="vl" style="left:988px"></div><div class="th" style="left:-78px;width:200px;">时间</div><div class="th" style="left:8px;width:200px;">类型</div><div class="th" style="left:77px;width:200px;">手数</div><div class="th" style="left:163px;width:200px;">交易品种</div><div class="th" style="left:249px;width:200px;">价格</div><div class="th" style="left:335px;width:200px;">止损</div><div class="th" style="left:421px;width:200px;">止盈</div><div class="th" style="left:611px;width:200px;">时间</div><div class="th" style="left:697px;width:200px;">价格</div><div class="th" style="left:783px;width:200px;">库存费</div><div class="th" style="left:885px;width:200px;">获利</div><div class="td" style="left:-77px;top:25px;width:200px">2021.08.26 12:43:34</div><div class="td" style="left:9px;top:25px;width:200px">sell</div><div class="td" style="left:78px;top:25px;width:200px">0.50</div><div class="td" style="left:164px;top:25px;width:200px">usdcad</div><div class="td" style="left:250px;top:25px;width:200px">1.26051</div><div class="td" style="left:336px;top:25px;width:200px">0.00000</div><div class="td" style="left:422px;top:25px;width:200px">0.00000</div><div class="td" style="left:612px;top:25px;width:200px">2021.08.30 15:07:43</div><div class="td" style="left:698px;top:25px;width:200px">1.26022</div><div class="td" style="left:784px;top:25px;width:200px">0.04</div><div class="td" style="left:886px;top:25px;width:200px">11.51</div><div class="td" style="left:-77px;top:46px;width:200px">2021.08.26 12:44:10</div><div class="td" style="left:9px;top:46px;width:200px">buy</div><div class="td" style="left:78px;top:46px;width:200px">0.50</div><div class="td" style="left:164px;top:46px;width:200px">audusd</div><div class="td" style="left:250px;top:46px;width:200px">0.72608</div><div class="td" style="left:336px;top:46px;width:200px">0.00000</div><div class="td" style="left:422px;top:46px;width:200px">0.00000</div><div class="td" style="left:612px;top:46px;width:200px">2021.08.27 16:19:57</div><div class="td" style="left:698px;top:46px;width:200px">0.72933</div><div class="td" style="left:784px;top:46px;width:200px">0.58</div><div class="td" style="left:886px;top:46px;width:200px">162.50</div><div class="td" style="left:-77px;top:67px;width:200px">2021.08.26 12:45:17</div><div class="td" style="left:9px;top:67px;width:200px">buy</div><div class="td" style="left:78px;top:67px;width:200px">0.50</div><div class="td" style="left:164px;top:67px;width:200px">xagusd</div><div class="td" style="left:250px;top:67px;width:200px">23.72</div><div class="td" style="left:336px;top:67px;width:200px">23.83</div><div class="td" style="left:422px;top:67px;width:200px">0.00</div><div class="td" style="left:612px;top:67px;width:200px">2021.08.27 17:24:24</div><div class="td" style="left:698px;top:67px;width:200px">23.86</div><div class="td" style="left:784px;top:67px;width:200px">-0.04</div><div class="td" style="left:886px;top:67px;width:200px">70.00</div><div class="td" style="left:-77px;top:88px;width:200px">2021.08.26 16:41:53</div><div class="td" style="left:9px;top:88px;width:200px">buy</div><div class="td" style="left:78px;top:88px;width:200px">0.50</div><div class="td" style="left:164px;top:88px;width:200px">gbpusd</div><div class="td" style="left:250px;top:88px;width:200px">1.37309</div><div class="td" style="left:336px;top:88px;width:200px">0.00000</div><div class="td" style="left:422px;top:88px;width:200px">0.00000</div><div class="td" style="left:612px;top:88px;width:200px">2021.08.27 16:17:41</div><div class="td" style="left:698px;top:88px;width:200px">1.37745</div><div class="td" style="left:784px;top:88px;width:200px">0.63</div><div class="td" style="left:886px;top:88px;width:200px">218.00</div><div class="a" style="left:1091px;top:0;width:21px;height:110px;background:#f0f0f0"></div><svg width="18" height="10" style="left:1092px;top:6px"><path d="M5,6.5 L8.5,3 L12,6.5" fill="none" stroke="#505050" stroke-width="2"/></svg><div class="a" style="left:1092px;top:33px;width:15px;height:17px;background:#cdcdcd"></div>
</div>
<div id="desk" class="a"><div class="a" style="left:8px;top:609px;width:2px;height:7px;background:#f0f0f0"></div></div>
</body></html>
